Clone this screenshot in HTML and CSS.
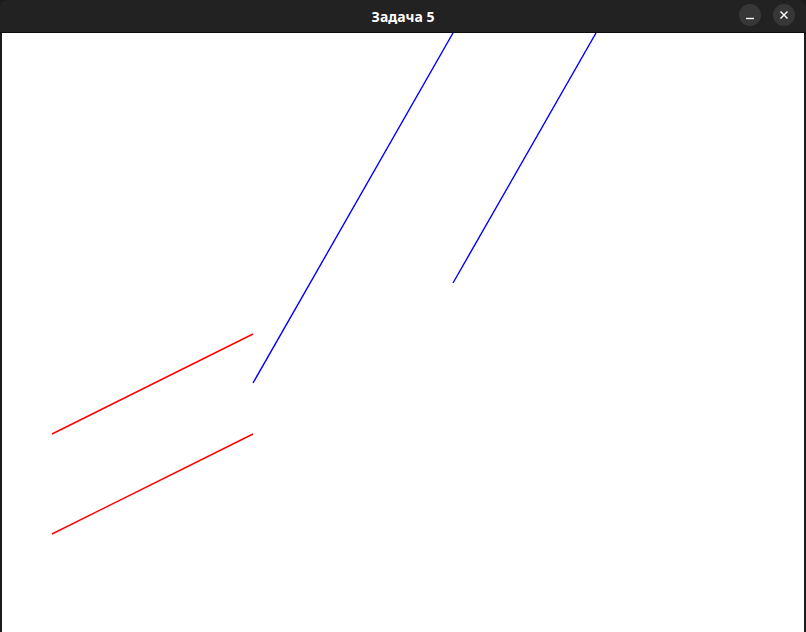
FILE: index.html
```html
<!DOCTYPE html>
<html lang="ru">
<head>
<meta charset="utf-8">
<title>Задача 5</title>
<link rel="stylesheet" href="styles.css">
</head>
<body>
<div class="window">
  <div class="titlebar">
    <div class="title">Задача 5</div>
    <div class="controls">
      <button class="btn" aria-label="Свернуть">
        <svg width="22" height="22" viewBox="0 0 22 22"><line x1="7" y1="14.5" x2="15" y2="14.5" stroke="#ffffff" stroke-width="1.3"/></svg>
      </button>
      <button class="btn" aria-label="Закрыть">
        <svg width="22" height="22" viewBox="0 0 22 22"><path d="M7.5 7.5 L14.5 14.5 M14.5 7.5 L7.5 14.5" stroke="#ffffff" stroke-width="1.4" fill="none"/></svg>
      </button>
    </div>
  </div>
  <div class="content">
    <svg class="canvas" width="802" height="599" viewBox="0 0 802 599">
      <line x1="251" y1="350" x2="451" y2="0" stroke="#0000ff" stroke-width="1.4"/>
      <line x1="451" y1="250" x2="594" y2="0" stroke="#0000ff" stroke-width="1.4"/>
      <line x1="50" y1="401" x2="251" y2="301" stroke="#ff0000" stroke-width="1.4"/>
      <line x1="50" y1="501" x2="251" y2="401" stroke="#ff0000" stroke-width="1.4"/>
    </svg>
  </div>
</div>
</body>
</html>
```
FILE: styles.css
```css
html, body {
  margin: 0;
  padding: 0;
  background: #121418;
  overflow: hidden;
}
.window {
  width: 806px;
  height: 632px;
  display: flex;
  flex-direction: column;
  background: #1b1b1b;
}
.titlebar {
  height: 32px;
  flex: 0 0 32px;
  background: #222222;
  border-bottom: 1px solid #0c0c0c;
  border-radius: 8px 8px 0 0;
  position: relative;
  display: flex;
  align-items: center;
  justify-content: center;
}
.title {
  font-family: "Noto Sans", "DejaVu Sans", sans-serif;
  font-weight: 700;
  font-size: 14px;
  color: #ffffff;
  letter-spacing: 0;
}
.controls {
  position: absolute;
  right: 11px;
  top: 4px;
  display: flex;
  gap: 12px;
}
.btn {
  width: 22px;
  height: 22px;
  border-radius: 50%;
  border: none;
  padding: 0;
  margin: 0;
  background: #373737;
  display: flex;
  align-items: center;
  justify-content: center;
}
.btn svg {
  display: block;
}
.content {
  flex: 1;
  margin: 0 2px 0 2px;
  background: #ffffff;
  overflow: hidden;
}
.canvas {
  display: block;
}
```
